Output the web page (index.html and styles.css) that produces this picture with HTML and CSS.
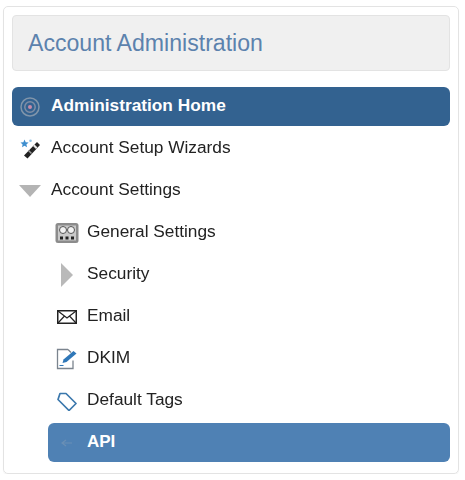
FILE: index.html
```html
<!DOCTYPE html>
<html lang="en">
<head>
<meta charset="utf-8">
<title>Account Administration</title>
<link rel="stylesheet" href="styles.css">
</head>
<body>
<div class="panel">
  <h1 class="title">Account Administration</h1>
  <nav class="menu">
    <a class="item home">
      <span class="icon">
        <svg width="20" height="20" viewBox="0 0 20 20"><circle cx="10" cy="10" r="9" fill="none" stroke="#8095aa" stroke-width="1.500"/><circle cx="10" cy="10" r="5.200" fill="none" stroke="#7f8ea6" stroke-width="1.500"/><circle cx="10" cy="10" r="2" fill="#c78aa8"/></svg>
      </span>
      Administration Home
    </a>
    <a class="item">
      <span class="icon">
        <svg width="22" height="22" viewBox="0 0 22 22"><path d="M5.500 1.500l1.200 2.700 2.900.3-2.200 1.900.7 2.900-2.600-1.500-2.500 1.500.6-2.900L1.500 4.500l2.900-.3z" fill="#3f8fcf"/><circle cx="11.500" cy="2.800" r="1.300" fill="#8fc4e8"/><path d="M18 4l3 3L8.500 20.500 5 17.500z" fill="#222"/><path d="M15.500 6.500l3 3-1.500 1.500-3-3z" fill="#e8e8e8"/><path d="M10 12l3 3-1 1-3-3z" fill="#999"/></svg>
      </span>
      Account Setup Wizards
    </a>
    <a class="item">
      <span class="icon">
        <svg width="22" height="14" viewBox="0 0 22 14"><path d="M0 1h22L11 13z" fill="#b4b4b4"/></svg>
      </span>
      Account Settings
    </a>
    <a class="item sub">
      <span class="icon">
        <svg width="24" height="21" viewBox="0 0 24 21"><rect x=".5" y=".5" width="23" height="20" rx="2.500" fill="#8c8c8c"/><rect x="3" y="3" width="18" height="15" fill="#c9c9c9"/><circle cx="8" cy="7.500" r="3.500" fill="#f2f2f2" stroke="#555"/><circle cx="16" cy="7.500" r="3.500" fill="#f2f2f2" stroke="#555"/><path d="M5 14h3v3H5zM10.500 14h3v3h-3zM16 14h3v3h-3z" fill="#222"/></svg>
      </span>
      General Settings
    </a>
    <a class="item sub">
      <span class="icon">
        <svg width="14" height="24" viewBox="0 0 14 24"><path d="M1 0l12 12L1 24z" fill="#b9b9b9"/></svg>
      </span>
      Security
    </a>
    <a class="item sub">
      <span class="icon">
        <svg width="20" height="14" viewBox="0 0 20 14"><rect x=".75" y=".75" width="18.500" height="12.500" fill="#fff" stroke="#222" stroke-width="1.500"/><path d="M1 1l9 7 9-7M1 13l6.500-7M19 13l-6.500-7" fill="none" stroke="#222" stroke-width="1.200"/></svg>
      </span>
      Email
    </a>
    <a class="item sub">
      <span class="icon">
        <svg width="22" height="22" viewBox="0 0 22 22"><path d="M12 1.500H1.500V20.500H17v-8M12 1.500l3 3" fill="none" stroke="#7b848e" stroke-width="1.300"/><path d="M6.500 15l1-3.500L17.500 3l3 2.500-10 8.500z" fill="#2f77b8"/><path d="M3.500 17.500h4" stroke="#2f77b8" stroke-width="1"/></svg>
      </span>
      DKIM
    </a>
    <a class="item sub">
      <span class="icon">
        <svg width="20" height="20" viewBox="0 0 20 20"><path d="M3 2.500H9L19 12.500 12 19.500 1 8.500z" fill="#fff" stroke="#3b78ad" stroke-width="1.700" stroke-linejoin="round"/></svg>
      </span>
      Default Tags
    </a>
    <a class="item sub api">
      <span class="icon">
        <svg width="12" height="8" viewBox="0 0 12 8"><path d="M1 4h10M5 1L1 4l4 3" fill="none" stroke="#6a8fb5" stroke-width="1.200"/></svg>
      </span>
      API
    </a>
  </nav>
</div>
</body>
</html>
```
FILE: styles.css
```css
* {
  box-sizing: border-box;
}

body {
  margin: 0;
  background: #fff;
  font-family: "Liberation Sans", Arial, sans-serif;
}

.panel {
  width: 456px;
  height: 468px;
  margin: 6px 0 0 3px;
  padding: 8px;
  border: 1px solid #e3e3e3;
  border-radius: 5px;
  box-shadow: 0 1px 1px rgba(0, 0, 0, 0.05);
  filter: blur(0.35px);
}

.title {
  height: 56px;
  margin: 0 0 16px;
  padding: 0 15px;
  border: 1px solid #e3e3e3;
  border-radius: 4px;
  background: #f0f0f0;
  color: #5c82ad;
  font-size: 23.1px;
  font-weight: 400;
  line-height: 54px;
}

.menu {
  display: flex;
  flex-direction: column;
  gap: 3px;
}

.item {
  display: flex;
  align-items: center;
  height: 39px;
  padding: 0 0 2px 39px;
  position: relative;
  color: #222;
  font-size: 17.3px;
  border-radius: 6px;
}

.icon {
  position: absolute;
  left: 18px;
  top: 50%;
  transform: translate(-50%, -50%);
  display: flex;
}

.sub {
  margin-left: 36px;
}

.sub .icon {
  left: 19px;
}

.home {
  background: #336290;
  color: #fff;
  font-weight: 700;
}

.api {
  background: #4f81b4;
  color: #fff;
  font-weight: 700;
  font-size: 17px;
}
```
